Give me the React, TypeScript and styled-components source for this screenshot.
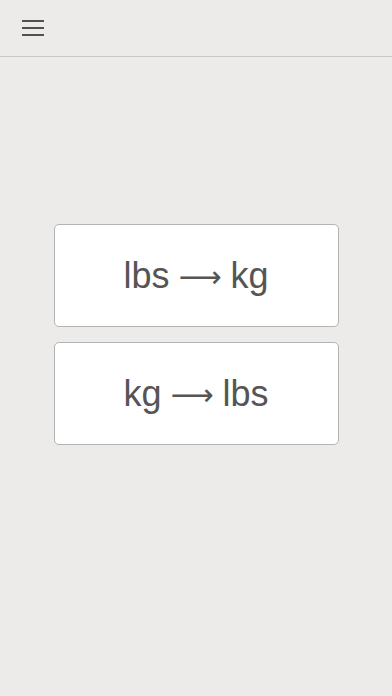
import styled, { createGlobalStyle } from 'styled-components';

const GlobalStyle = createGlobalStyle`
  html, body {
    margin: 0;
    padding: 0;
    background: #ecebe9;
    font-family: "Liberation Sans", Arial, sans-serif;
  }
`;

const Page = styled.div`
  min-height: 696px;
  background: #ecebe9;
`;

const Header = styled.header`
  height: 56px;
  border-bottom: 1px solid #c9c8c6;
  display: flex;
  align-items: center;
  padding-left: 22px;
`;

const MenuButton = styled.button`
  width: 22px;
  height: 16px;
  padding: 0;
  border: 0;
  background: none;
  display: flex;
  flex-direction: column;
  justify-content: space-between;
  cursor: pointer;
`;

const MenuBar = styled.span`
  display: block;
  height: 2px;
  width: 22px;
  background: #505050;
`;

const Content = styled.main`
  display: flex;
  flex-direction: column;
  align-items: center;
  gap: 15px;
  padding-top: 167px;
`;

const ConvertButton = styled.button`
  width: 285px;
  height: 103px;
  box-sizing: border-box;
  background: #ffffff;
  border: 1px solid #b3b3b3;
  border-radius: 5px;
  color: #555555;
  font-family: "Liberation Sans", Arial, sans-serif;
  font-size: 36px;
  display: flex;
  align-items: center;
  justify-content: center;
  gap: 9px;
  padding: 0;
  cursor: pointer;
`;

const Unit = styled.span`
  line-height: 1;
`;

const Arrow = styled.span`
  font-family: "DejaVu Sans", sans-serif;
  font-size: 30px;
  line-height: 1;
  position: relative;
  top: 1px;
`;

const CONVERSIONS: [string, string][] = [
  ['lbs', 'kg'],
  ['kg', 'lbs'],
];

export default function App() {
  return (
    <Page>
      <GlobalStyle />
      <Header>
        <MenuButton aria-label="menu">
          <MenuBar />
          <MenuBar />
          <MenuBar />
        </MenuButton>
      </Header>
      <Content>
        {CONVERSIONS.map(([from, to]) => (
          <ConvertButton key={from}>
            <Unit>{from}</Unit>
            <Arrow>⟶</Arrow>
            <Unit>{to}</Unit>
          </ConvertButton>
        ))}
      </Content>
    </Page>
  );
}
